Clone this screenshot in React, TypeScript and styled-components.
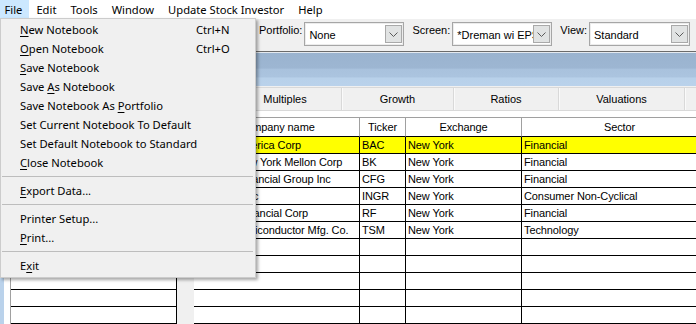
import React from "react";
import styled, { createGlobalStyle } from "styled-components";

const GlobalStyle = createGlobalStyle`
  html, body {
    margin: 0;
    padding: 0;
  }
  body {
    width: 696px;
    height: 324px;
    overflow: hidden;
    background: #f0f0f0;
    font-family: "Liberation Sans", Arial, sans-serif;
  }
`;

const Screen = styled.div`
  position: relative;
  display: flex;
  flex-direction: column;
  width: 696px;
  height: 324px;
  overflow: hidden;
  background: #f0f0f0;
`;

const MenuBar = styled.div`
  display: flex;
  gap: 1px;
  height: 19px;
  flex: none;
  background: #ffffff;
  font-family: "Noto Sans", sans-serif;
  font-size: 11.2px;
  color: #000;
`;

const MenuTitle = styled.div<{ $open?: boolean }>`
  display: flex;
  align-items: center;
  padding: 0 6.5px 1px;
  background: ${(p) => (p.$open ? "#cce8ff" : "transparent")};
  &:first-child {
    margin-left: -2px;
  }
`;

const Toolbar = styled.div`
  display: flex;
  justify-content: flex-end;
  align-items: flex-start;
  gap: 8px;
  flex: none;
  height: 33px;
  padding: 3px 6px 0 0;
  box-sizing: border-box;
  background: #f0f0f0;
  border-bottom: 1px solid #6b6b6b;
  font-size: 11px;
`;

const Field = styled.div`
  display: flex;
  align-items: flex-start;
  gap: 2px;
`;

const FieldLabel = styled.span`
  margin-top: 1.5px;
  line-height: 13px;
  color: #000;
`;

const Combo = styled.div<{ $w: number }>`
  display: flex;
  align-items: center;
  width: ${(p) => p.$w}px;
  height: 24px;
  box-sizing: border-box;
  background: #fff;
  border: 1px solid #a6a6a6;
  box-shadow: inset 0 0 0 1px #ececec;
`;

const ComboText = styled.span`
  flex: 1;
  overflow: hidden;
  white-space: nowrap;
  padding-left: 4px;
  line-height: 14px;
  padding-top: 1px;
  color: #000;
`;

const ComboButton = styled.div`
  display: flex;
  align-items: center;
  justify-content: center;
  width: 17px;
  height: 18px;
  margin-right: 1px;
  flex: none;
  box-sizing: border-box;
  background: #e1e3e3;
  border: 1px solid #a9a9a9;
`;

const Caption = styled.div`
  flex: none;
  height: 33px;
  border-top: 1px solid #e4e9ef;
  background: linear-gradient(
    #9ab3cf 0%,
    #9db6d2 45%,
    #a9c2dd 50%,
    #abc4df 72%,
    #b8d1ea 76%,
    #bad2eb 100%
  );
`;

const Body = styled.div`
  flex: 1;
  display: flex;
  flex-direction: column;
  border-left: 4px solid #bad2eb;
  background: #f0f0f0;
`;

const TabStrip = styled.div`
  display: flex;
  flex: none;
  height: 25px;
  padding-top: 1px;
  box-sizing: border-box;
  margin-left: -4px;
  background: #f0f0f0;
  font-size: 11px;
`;

const Tab = styled.div<{ $w: number }>`
  display: flex;
  align-items: center;
  justify-content: center;
  flex: none;
  width: ${(p) => p.$w}px;
  box-sizing: border-box;
  border: 1px solid #d9d9d9;
  border-left: none;
  box-shadow: inset 1px 0 0 #fafafa;
  color: #000;
`;

const Page = styled.div`
  flex: 1;
  display: flex;
  padding: 6px 0 0 6px;
  background: #ffffff;
  overflow: hidden;
`;

const Grid = styled.div<{ $left?: boolean }>`
  flex: none;
  border-top: 1px solid #a0a0a0;
  border-left: ${(p) => (p.$left ? "1px solid #a0a0a0" : "none")};
  font-size: 11px;
  letter-spacing: -0.1px;
`;

const Splitter = styled.div`
  flex: none;
  width: 17px;
  background: #f0f0f0;
`;

const Row = styled.div<{ $cols: string; $hi?: boolean }>`
  display: grid;
  grid-template-columns: ${(p) => p.$cols};
  background: ${(p) => (p.$hi ? "#ffff00" : "#ffffff")};
`;

const HeadCell = styled.div`
  height: 19px;
  box-sizing: border-box;
  display: flex;
  align-items: center;
  justify-content: center;
  white-space: nowrap;
  overflow: hidden;
  border-right: 1px solid #a0a0a0;
  border-bottom: 1px solid #000;
  color: #000;
`;

const Cell = styled.div`
  height: 17px;
  box-sizing: border-box;
  display: flex;
  align-items: center;
  padding-left: 2px;
  white-space: nowrap;
  overflow: hidden;
  border-right: 1px solid #000;
  border-bottom: 1px solid #000;
  color: #000;
`;

const Dropdown = styled.div`
  position: absolute;
  top: 18px;
  left: 0;
  width: 256px;
  box-sizing: border-box;
  padding: 1px 0 2px;
  background: #f0f0f0;
  border: 1px solid #cccccc;
  box-shadow: 2px 2px 3px rgba(0, 0, 0, 0.35);
  font-family: "Noto Sans", sans-serif;
  font-size: 11.2px;
  color: #000;
  z-index: 10;
`;

const Item = styled.div`
  display: grid;
  grid-template-columns: 176px auto;
  align-items: center;
  height: 19px;
  padding-left: 19px;
  white-space: nowrap;
`;

const Shortcut = styled.span`
  grid-column: 2;
`;

const Sep = styled.div`
  height: 9px;
  display: flex;
  align-items: center;
  padding: 0 2px 0 1px;
  &::after {
    content: "";
    flex: 1;
    height: 1px;
    background: #bdbdbd;
  }
`;

const Key = styled.span`
  text-decoration: underline;
  text-underline-offset: 1.5px;
  text-decoration-thickness: 1px;
`;

const Chevron = () => (
  <svg width="9" height="5" viewBox="0 0 9 5">
    <polyline points="0.5,0.5 4.5,4.5 8.5,0.5" fill="none" stroke="#5a5a5a" strokeWidth="1" />
  </svg>
);

type MenuEntry = { pre?: string; key?: string; post?: string; shortcut?: string } | "sep";

const fileMenu: MenuEntry[] = [
  { key: "N", post: "ew Notebook", shortcut: "Ctrl+N" },
  { key: "O", post: "pen Notebook", shortcut: "Ctrl+O" },
  { key: "S", post: "ave Notebook" },
  { pre: "Save ", key: "A", post: "s Notebook" },
  { pre: "Save Notebook As ", key: "P", post: "ortfolio" },
  { pre: "Set Current Notebook To Default" },
  { pre: "Set Default Notebook to Standard" },
  { key: "C", post: "lose Notebook" },
  "sep",
  { key: "E", post: "xport Data..." },
  "sep",
  { pre: "Printer Setup..." },
  { key: "P", post: "rint..." },
  "sep",
  { pre: "E", key: "x", post: "it" },
];

const tabs = [
  { label: "General", w: 117 },
  { label: "Price & Volume", w: 112 },
  { label: "Multiples", w: 113 },
  { label: "Growth", w: 112 },
  { label: "Ratios", w: 105 },
  { label: "Valuations", w: 126 },
  { label: "Custom", w: 110 },
];

const cols = "166px 46px 116px 196px";
const companies = [
  ["Bank of America Corp", "BAC", "New York", "Financial"],
  ["Bank of New York Mellon Corp", "BK", "New York", "Financial"],
  ["Citizens Financial Group Inc", "CFG", "New York", "Financial"],
  ["Ingredion Inc", "INGR", "New York", "Consumer Non-Cyclical"],
  ["Regions Financial Corp", "RF", "New York", "Financial"],
  ["Taiwan Semiconductor Mfg. Co.", "TSM", "New York", "Technology"],
];
const ROWS = 12;

export default function App() {
  const rows = Array.from({ length: ROWS }, (_, i) => companies[i] || ["", "", "", ""]);

  return (
    <Screen>
      <GlobalStyle />
      <MenuBar>
        <MenuTitle $open>File</MenuTitle>
        <MenuTitle>Edit</MenuTitle>
        <MenuTitle>Tools</MenuTitle>
        <MenuTitle>Window</MenuTitle>
        <MenuTitle>Update Stock Investor</MenuTitle>
        <MenuTitle>Help</MenuTitle>
      </MenuBar>

      <Toolbar>
        <Field>
          <FieldLabel>Portfolio:</FieldLabel>
          <Combo $w={100}>
            <ComboText>None</ComboText>
            <ComboButton><Chevron /></ComboButton>
          </Combo>
        </Field>
        <Field>
          <FieldLabel>Screen:</FieldLabel>
          <Combo $w={100}>
            <ComboText>*Dreman wi EPS</ComboText>
            <ComboButton><Chevron /></ComboButton>
          </Combo>
        </Field>
        <Field>
          <FieldLabel>View:</FieldLabel>
          <Combo $w={101}>
            <ComboText>Standard</ComboText>
            <ComboButton><Chevron /></ComboButton>
          </Combo>
        </Field>
      </Toolbar>

      <Caption />

      <Body>
        <TabStrip>
          {tabs.map((t) => (
            <Tab key={t.label} $w={t.w}>{t.label}</Tab>
          ))}
        </TabStrip>
        <Page>
          <Grid $left>
            <Row $cols="166px">
              <HeadCell>Notes</HeadCell>
            </Row>
            {rows.map((_, i) => (
              <Row key={i} $cols="166px">
                <Cell />
              </Row>
            ))}
          </Grid>
          <Splitter />
          <Grid>
            <Row $cols={cols}>
              <HeadCell>Company name</HeadCell>
              <HeadCell>Ticker</HeadCell>
              <HeadCell>Exchange</HeadCell>
              <HeadCell>Sector</HeadCell>
            </Row>
            {rows.map((r, i) => (
              <Row key={i} $cols={cols} $hi={i === 0}>
                {r.map((v, j) => (
                  <Cell key={j}>{v}</Cell>
                ))}
              </Row>
            ))}
          </Grid>
        </Page>
      </Body>

      <Dropdown>
        {fileMenu.map((m, i) =>
          m === "sep" ? (
            <Sep key={i} />
          ) : (
            <Item key={i}>
              <span>
                {m.pre}
                {m.key && <Key>{m.key}</Key>}
                {m.post}
              </span>
              {m.shortcut && <Shortcut>{m.shortcut}</Shortcut>}
            </Item>
          )
        )}
      </Dropdown>
    </Screen>
  );
}
